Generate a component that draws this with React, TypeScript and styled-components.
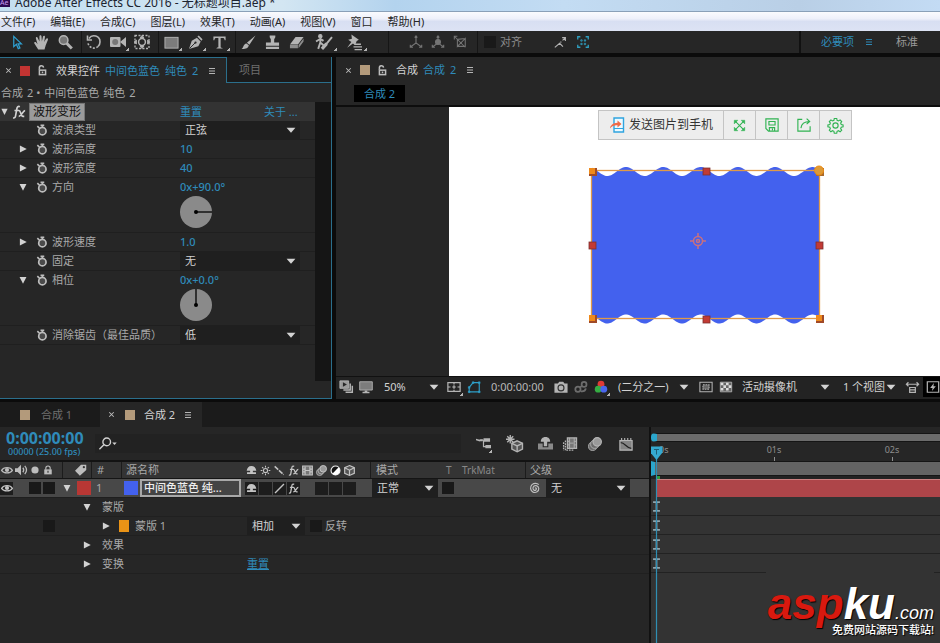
import React from "react";
import styled, { createGlobalStyle } from "styled-components";

const C = {
  panel: "#262626",
  dark: "#1b1b1b",
  line: "#0b0b0b",
  text: "#a9a9a9",
  bright: "#d2d2d2",
  dim: "#6f6f6f",
  blue: "#2f8bba",
  edge: "#2b6f8c",
};

const Global = createGlobalStyle`
  *, *::before, *::after { box-sizing: border-box; }
  body {
    margin: 0;
    background: ${C.line};
    color: ${C.text};
    font: 11px/16px "Noto Sans", "Noto Sans CJK SC", sans-serif;
    overflow: hidden;
  }
  button, select, input { font: inherit; color: inherit; margin: 0; padding: 0; border: 0; background: none; }
  button { white-space: nowrap; }
  a { color: inherit; }
`;

/* ---------- icons ---------- */

const Svg = styled.svg<{ $size: number }>`
  display: block;
  flex: none;
  width: ${(p) => p.$size}px;
  height: ${(p) => p.$size}px;
  overflow: visible;
`;

const icons: Record<string, React.ReactNode> = {
  arrow: <path d="M4 1.500v11l2.800-2.500 2 4.500 1.800-.8-2-4.300h3.600z" fill="none" stroke="#2f9fd0" strokeWidth="1.300" />,
  hand: <path fill="currentColor" d="M4.500 15.500L.4 9c-.8-1.300.9-2.200 1.700-1.200L3.800 9.800 2 3.600c-.3-1.500 1.600-1.900 2-.5L5.800 7V1.500c0-1.600 2.100-1.600 2.200 0l.4 5.300 1.200-5.100c.4-1.500 2.400-1.100 2.100.5l-.8 5.300 2-3.400c.9-1.300 2.500-.4 1.900 1.100L12.500 11l-1.300 4.500z" />,
  zoom: <g><circle cx="6" cy="5.500" r="4.600" fill="#777" stroke="currentColor" strokeWidth="1.600" /><path d="M9.200 8.800l5.500 5.600" stroke="currentColor" strokeWidth="3.200" /></g>,
  rotate: <g fill="none" stroke="currentColor" strokeWidth="1.600"><path d="M3 4.500A6 6 0 0 1 14 8 6 6 0 0 1 12 12.500" /><path d="M12 12.500A6 6 0 0 1 2 9" strokeDasharray="2 1.500" /><path d="M1.500 1.500v4.500H6" /></g>,
  camera: <g fill="currentColor"><rect x="0" y="3" width="10.500" height="10" rx="1" /><path d="M10 8l6-5v10z" /><circle cx="5.200" cy="8" r="3" fill="#777" /></g>,
  panbehind: <g fill="none" stroke="currentColor"><rect x="1" y="1.500" width="14" height="13" strokeDasharray="2 1.500" strokeWidth="1.300" /><circle cx="8" cy="8" r="3.400" strokeWidth="1.500" /><path fill="currentColor" d="M0 8l2.500-2v4zM16 8l-2.500-2v4zM8 1.500l2 2.500H6zM8 14.500L6 12h4z" strokeWidth=".8" /></g>,
  rect: <rect x="1" y="2.500" width="14" height="11.500" fill="#7c7c7c" stroke="currentColor" />,
  pen: <g><path fill="currentColor" d="M1 15L4 6l5.500-3 4 4L11 12z" /><path fill="currentColor" d="M10 1.500l1.500-1 4 4-1.200 1.700z" /><path d="M1.500 14.500L7.500 8.500" stroke="#262626" /><circle cx="8" cy="8" r="1.200" fill="#262626" /></g>,
  type: <path fill="currentColor" d="M1.500 1.500h13V5.500h-1c-.2-1.500-.8-2.200-2.300-2.200H9.200V12.500c0 1 .5 1.200 2 1.300v.7H4.800v-.7c1.500-.1 2-.3 2-1.300V3.300H4.800c-1.500 0-2.100.7-2.300 2.200h-1z" />,
  brush: <path fill="currentColor" d="M15.500.5L9 10.300 6.300 8.300zM5.800 9l2.500 2C7.800 14.500 4.500 15.200.5 15 3 13.500 2.300 9.500 5.800 9z" />,
  stamp: <path fill="currentColor" d="M5 .5h6v2L9.800 4.500v3.500H15v3.500H1V8h5.200V4.500L5 2.500zM1 12.500h14V15H1z" />,
  eraser: <g><path fill="currentColor" d="M7 2h8.500l-6 8H1z" /><path fill="#8c8c8c" d="M1 10.700h8.500V14H1zM10.200 10.700L15.500 3.600V7l-5.300 7z" /></g>,
  roto: <g fill="none" stroke="currentColor"><circle cx="5" cy="2" r="1.600" fill="currentColor" /><path d="M5 4v4l3 2.500M5 8l-2 6M1 7l4-2.500 3 2" strokeWidth="1.800" /><path d="M16 3L10.500 9.500" strokeWidth="1.800" /><path d="M11 9l-4.500 5" strokeWidth="3" /></g>,
  pin: <g fill="currentColor"><path d="M6 .5l7 5-2 1-1.500 4-2-1.500-5.500 4 4-5.500L3 5.500l3.500-1z" /><path d="M9 9h6v1.300H9zM8 11.500h8v1.300H8zM9 14h7v1.300H9z" /></g>,
  axis: <g fill="none" stroke="currentColor" strokeWidth="1.300"><path d="M8 1v8L2 13.500M8 9l6 4.500M6.500 3L8 1l1.500 2M1.500 11v3h3M14.500 11v3h-3" /></g>,
  axisball: <g fill="none" stroke="currentColor" strokeWidth="1.300"><path d="M8 1v8L2 13.500M8 9l6 4.500M6.500 3L8 1l1.500 2M1.500 11v3h3M14.500 11v3h-3" /><circle cx="8" cy="8" r="2.800" fill="currentColor" /></g>,
  axisbox: <g fill="none" stroke="currentColor" strokeWidth="1.200"><path d="M2 2l12 12M1.500 5V1.500H5M5 5v8l9-9v10M5 5l9-1M5 13h9" /></g>,
  snap: <g fill="none" stroke="currentColor" strokeWidth="1.400"><path d="M1 14l6-5 4 4M8 8l1-1M10.500 5.500l3-3M10 2h4v4" /></g>,
  snapbox: <g fill="none" stroke="#2f9fc0" strokeWidth="1.500"><path d="M2 5V2h3M11 2h3v3M14 11v3h-3M5 14H2v-3" /><path d="M5.500 5.500h1.500v1.500H5.500zM9.500 5.500h1.500v1.500H9.500zM5.500 9.500h1.500v1.500H5.500zM9.500 9.500h1.500v1.500H9.500z" strokeWidth="1" /></g>,
  menu: <path d="M2 3h12M2 8h12M2 13h12" stroke="currentColor" strokeWidth="1.900" />,
  close: <path d="M4 4l8 8M12 4l-8 8" stroke="currentColor" strokeWidth="1.800" />,
  unlock: <g fill="none" stroke="currentColor" strokeWidth="2.200"><path d="M3.500 7V4.500a3 3 0 0 1 6-.8" /><rect x="3.500" y="7.500" width="9" height="6.500" /><path d="M8 9.500v2.500" /></g>,
  lock: <g><path d="M4.500 7.500V5a3.500 3.500 0 0 1 7 0v2.500" fill="none" stroke="currentColor" strokeWidth="1.800" /><path fill="currentColor" d="M2 7h12v8H2z" /><path d="M8 9v3.500" stroke="#333" strokeWidth="1.800" /></g>,
  stopwatch: <g fill="none" stroke="currentColor"><circle cx="8.500" cy="9.500" r="4.900" strokeWidth="2.300" fill="#4a4a4a" /><path d="M8.500 4.500V2M6 1.700h5M1.800 2.800l3.200 3.200" strokeWidth="2.200" /></g>,
  right: <path d="M3 2.500l11 5.500-11 5.500z" fill="currentColor" />,
  down: <path d="M2.500 3h11L8 14z" fill="currentColor" />,
  caret: <path d="M1 4.500h14L8 12.500z" fill="currentColor" />,
  fx: (
    <g fill="none" stroke="currentColor" strokeWidth="1.900">
      <path d="M9 2c-2-1-3.100.2-3.400 2L4 12.800c-.3 1.600-1.200 2.200-2.700 1.700M2.800 6.300h5.400M8 6.500c2.200 0 2 6.500 4.500 6.500h1.500M15 6.500c-2.700 0-4 6.500-7.300 6.500" />
    </g>
  ),
  pages: <g><path d="M1 1h10v8.500H1z" fill="#9a9a9a" stroke="currentColor" /><path d="M12.800 4v7.300H5M15.200 6.500V14H7.500" fill="none" stroke="currentColor" strokeWidth="1.700" /><path d="M4.500 2.600v5.200l4.500-2.600z" fill="#262626" /></g>,
  monitor: <g><path d="M.8 2h14.400v9.500H.8z" fill="#7c7c7c" stroke="currentColor" /><path d="M6.500 12h3v1.500h2.500V15H4v-1.500h2.500z" fill="currentColor" /></g>,
  guides: <g fill="none" stroke="currentColor" strokeWidth="1.400"><path d="M1 3h14v10H1zM8 3v2M8 11v2M1 8h3M12 8h3M6 8h4M8 6v4" /></g>,
  maskshape: <g fill="none" stroke="#2f9fc8" strokeWidth="1.300"><path d="M2.500 13.500v-5L7 3h7v10.500z" /><path fill="#2f9fc8" d="M1.500 12.500h2v2h-2zM13 12.500h2v2h-2zM13 2h2v2h-2zM6 2h2v2H6zM1.500 7.500h2v2h-2z" strokeWidth=".5" /></g>,
  photo: <g><path fill="currentColor" d="M.5 4h4L6 2h4.500L12 4h3.500v10.500H.5z" /><circle cx="8" cy="9" r="3.400" fill="none" stroke="#333" strokeWidth="1.300" /></g>,
  chain: <g fill="none" stroke="#6d6d6d" strokeWidth="2"><circle cx="4.500" cy="10.500" r="3" /><circle cx="11.500" cy="5" r="2.800" /><path d="M6.500 8.500l3-2M8 13c4 .5 5-1 5.500-3.500" /></g>,
  rgb: <g><circle cx="8" cy="4.800" r="3.900" fill="#e03a35" /><circle cx="4.800" cy="10.500" r="3.900" fill="#35ad43" /><circle cx="11.200" cy="10.500" r="3.900" fill="#4a66ee" /></g>,
  region: <g fill="none" stroke="currentColor" strokeWidth="1.200"><path d="M1 2.500h14v11H1z" /><path fill="#666" d="M4.500 5.500h7v5h-7z" strokeDasharray="2 1" /></g>,
  checker: <g><path fill="#666" stroke="currentColor" d="M1.500 2.500h13v11h-13z" /><path fill="#dcdcdc" d="M2 3h3v3H2zM8 3h3v3H8zM5 6h3v3H5zM11 6h3v3h-3zM2 9h3v3H2zM8 9h3v3H8z" /></g>,
  pixel: <g fill="none" stroke="currentColor" strokeWidth="1.500"><path d="M0 4h16M3 1.500L.5 4 3 6.500M13 1.500L15.500 4 13 6.500M4.500 8h7v6h-7zM4.500 11h7" /></g>,
  fast: <g><path fill="none" stroke="currentColor" strokeWidth="1.400" d="M1.500 2h13v12h-13z" /><path d="M9 3.500L4.800 9h2.700L6.800 12.500 11.200 7H8.500z" fill="currentColor" /></g>,
  search: <g fill="none" stroke="currentColor" strokeWidth="1.700"><circle cx="9.500" cy="6" r="4.700" /><path d="M6 9.500L.5 15" /></g>,
  flow: <g fill="currentColor"><path d="M0 3l4 1v-.5h3v2H4v.3L0 4.500zM8 2.500h7v3.500H8zM10 9.500h6v3.500h-6z" /><path d="M6 4.500h2M8 4.500v6.800h3" fill="none" stroke="currentColor" strokeWidth="1.300" /></g>,
  draft3d: <g fill="none" stroke="currentColor" strokeWidth="1.300"><path d="M4 0v8M0 4h8M1.200 1.200l5.600 5.600M6.800 1.200L1.200 6.800" /><path fill="#555" d="M10.500 5.500l5 2.300v5.500l-5 2.500-5-2.500V7.800z" /><path d="M5.500 7.800l5 2.500 5-2.500M10.500 10.300v5.500" /></g>,
  shy: <g fill="currentColor"><path d="M0 8h5v4h6V8h5v6.500H0z" fill="#8a8a8a" /><path d="M8 1c3.500 0 5 2.300 5 5H9.800v5H6.200V6H3c0-2.700 1.500-5 5-5z" /></g>,
  shysmall: <g fill="currentColor"><path d="M8 1.500c4.500 0 6.500 3 7 7H10v2h4.500V13h-13v-2.500H6v-2H1c.5-4 2.500-7 7-7z" /></g>,
  frames: <g><path d="M5 1h10.500v12H5z" fill="#777" stroke="currentColor" strokeWidth="1.400" /><path d="M7.500 1v12M12.800 1v12M5 5h2.500M5 9h2.500M12.800 5h2.700M12.800 9h2.700M8 7h4" stroke="currentColor" /><path d="M2.800 4v11h9M.7 6v9.500" fill="none" stroke="currentColor" strokeWidth="1.500" strokeDasharray="2 1" /></g>,
  blur: <g stroke="currentColor" fill="#6b6b6b"><circle cx="5.300" cy="10.700" r="4.700" /><circle cx="7.700" cy="8.300" r="4.700" /><circle cx="10.500" cy="5.500" r="4.800" fill="#9a9a9a" strokeWidth="1.400" /></g>,
  graph: <g><path fill="#858585" stroke="currentColor" strokeWidth="1.300" d="M1 4h14v11H1zM3 1v3M6.500 1v3M10 1v3M13.500 1v3" /><path d="M2 6.500c5 0 6 6 12 6.500" fill="none" stroke="#222" strokeWidth="1.400" /></g>,
  eye: <g><path d="M.8 8.500C3.500 3.500 12.500 3.500 15.200 8.500 12.500 13 3.500 13 .8 8.500z" fill="none" stroke="currentColor" strokeWidth="1.600" /><circle cx="8" cy="8" r="2.800" fill="currentColor" /></g>,
  speaker: <g><path fill="currentColor" d="M0 5.500h3.500L8 1v14L3.500 10.500H0z" /><path d="M10.500 5c1.500 2 1.500 4 0 6M13 2.500c3 3.500 3 7.500 0 11" fill="none" stroke="currentColor" strokeWidth="1.700" /></g>,
  dot: <circle cx="8" cy="8" r="4.800" fill="currentColor" />,
  tag: <g><path fill="currentColor" d="M8 1h7v7L6.500 15.500 0 9z" /><circle cx="11.800" cy="4.300" r="1.500" fill="#333" /></g>,
  sun: <g fill="none" stroke="currentColor" strokeWidth="1.500"><circle cx="8" cy="8" r="3" /><path d="M8 1v2.500M8 12.500V15M1 8h2.500M12.500 8H15M3 3l2 2M11 11l2 2M13 3l-2 2M5 11l-2 2" /></g>,
  slashback: <path d="M1 2l13 12" stroke="currentColor" strokeWidth="2.200" strokeDasharray="7 1.500" />,
  slash: <path d="M1.500 14.500L14.500 1.500" stroke="currentColor" strokeWidth="2" />,
  film: <g fill="none" stroke="currentColor" strokeWidth="1.700"><path fill="#777" d="M1 1.500h14v13H1z" /><path d="M4.500 2v12M11.500 2v12M1.500 6h3M1.500 10h3M11.500 6h3M11.500 10h3M4.500 8h7" /></g>,
  half: <g><circle cx="8" cy="8" r="6.500" fill="#111" stroke="#eee" strokeWidth="1.700" /><path d="M12.600 3.400A6.500 6.500 0 0 1 3.400 12.600z" fill="#fff" /></g>,
  cube: <g fill="none" stroke="currentColor" strokeWidth="1.700"><path fill="#555" d="M8 .8l7 3.200v8L8 15.200 1 12V4z" /><path d="M1 4l7 3.500L15 4M8 7.500V15" /></g>,
  whip: <path d="M8 8.500c1-1.500 2.800.3 1.500 1.800C7.500 12.500 4.500 10 5.500 7c1.500-3.500 6.800-2.500 7.500 1.500.5 4-4 6.500-7.500 5C1.500 11.500 1 6.500 4 3.500 7 1 11 1.500 13 3.500" fill="none" stroke="currentColor" strokeWidth="1.600" />,
  phone: <g><path d="M5 1h9.500v14H5z" fill="#eefaff" stroke="#2fa4df" strokeWidth="1.400" /><path d="M5 11.500h9.500" stroke="#2fa4df" /><path d="M8.500 3.500L12.500 7 8.500 10.500V8.300C5.500 8 3 9 1 11.500 1.300 8.500 4 6 8.500 5.800z" fill="#f26a46" /></g>,
  expand: <g stroke="#30b352" strokeWidth="1.300" fill="#30b352"><path d="M3 3l10 10M13 3L3 13" /><path d="M1.500 1.500H6L1.500 6zM14.500 1.500V6L10 1.500zM1.500 14.500V10L6 14.500zM14.500 14.500H10L14.500 10z" strokeWidth=".5" /></g>,
  save: <g stroke="#30b352" strokeWidth="1.300" fill="none"><path d="M1 1h14v14H4l-3-3zM4.500 4h7v4h-7zM5 15v-4h6v4M8.500 12v2" /></g>,
  share: <g stroke="#30b352" strokeWidth="1.300" fill="none"><path d="M6 1.500H1v13.500h14V9.500M4.500 11.500C5 7 8.500 4 14.500 4M11 .8L14.500 4 11 7" /></g>,
  gear: <g stroke="#30b352" strokeWidth="1.200" fill="none"><circle cx="8" cy="8" r="2.800" /><path d="M6.700.5h2.600l.4 2 1.500.6L12.900 2l1.700 1.800-1.100 1.700.6 1.400 2 .4v2.100l-2 .4-.6 1.500 1.100 1.700-1.700 1.700-1.700-1.100-1.500.6-.4 2H6.700l-.4-2-1.500-.6-1.700 1.100-1.700-1.700 1.100-1.700-.6-1.500-2-.4V7.300l2-.4.6-1.400L1.400 3.800 3.100 2l1.700 1.100 1.500-.6z" /></g>,
  ibeam: <path d="M3 1.500h10M3 14.500h10M8 1.500v13" stroke="#8ea5ae" strokeWidth="2.600" />,
};

const Icon = ({ name, size = 14 }: { name: string; size?: number }) => (
  <Svg viewBox="0 0 16 16" $size={size} aria-hidden="true">{icons[name]}</Svg>
);

/* ---------- shared controls ---------- */

const IconButton = styled.button<{ $w?: number; $dim?: boolean; $corner?: boolean; $black?: boolean }>`
  display: grid;
  place-items: center;
  flex: none;
  width: ${(p) => p.$w ?? 20}px;
  height: 20px;
  color: ${(p) => (p.$dim ? "#747474" : "#b4b4b4")};
  background: ${(p) => (p.$black ? "#000" : "none")};
  position: relative;
  &::after {
    content: "";
    display: ${(p) => (p.$corner ? "block" : "none")};
    position: absolute;
    right: 1px;
    bottom: 1px;
    width: 3px;
    height: 3px;
    background: linear-gradient(135deg, transparent 40%, #b4b4b4 40%);
  }
`;

const TextButton = styled.button<{ $tone?: string }>`
  color: ${(p) => p.$tone ?? C.blue};
`;

const SelectBox = styled.span<{ $w: number; $fill?: string }>`
  display: inline-grid;
  align-items: center;
  flex: none;
  width: ${(p) => p.$w}px;
  height: 18px;
  padding-right: 4px;
  background: ${(p) => p.$fill ?? "#1f1f1f"};
  color: ${C.bright};
  select {
    grid-area: 1 / 1;
    width: 100%;
    height: 18px;
    padding-left: 5px;
    appearance: none;
    outline: 0;
  }
  svg { grid-area: 1 / 1; justify-self: end; pointer-events: none; }
`;

const Select = ({ label, value, w, fill }: { label: string; value: string; w: number; fill?: string }) => (
  <SelectBox $w={w} $fill={fill}>
    <select aria-label={label} defaultValue={value}><option>{value}</option></select>
    <Icon name="caret" size={10} />
  </SelectBox>
);

const Tick = styled.input.attrs({ type: "checkbox" })`
  appearance: none;
  flex: none;
  width: 12px;
  height: 12px;
  background: #191919;
`;

const Swatch = styled.span<{ $c: string; $w?: number; $h?: number }>`
  flex: none;
  width: ${(p) => p.$w ?? 10}px;
  height: ${(p) => p.$h ?? 10}px;
  background: ${(p) => p.$c};
`;

/* ---------- window chrome ---------- */

const Page = styled.div`
  display: flex;
  flex-direction: column;
  min-height: 100vh;
`;

const TitleBar = styled.header`
  display: flex;
  align-items: flex-end;
  gap: 5px;
  height: 11px;
  overflow: hidden;
  color: #1c2430;
  font-size: 12px;
  line-height: 17px;
  white-space: nowrap;
  background: linear-gradient(90deg, #c3dff0 0, #d3e6f2 30%, #b3d3ee 42%, #c3dcf3 60%, #b9cfe6 85%, #c3dbf4 100%);
`;

const AppBadge = styled.span`
  align-self: flex-start;
  width: 10px;
  height: 7px;
  overflow: hidden;
  background: #2b0a52;
  color: #c79bf0;
  font-size: 7px;
  line-height: 6px;
`;

const MenuBar = styled.nav`
  display: flex;
  gap: 15px;
  height: 20px;
  padding-left: 1px;
  border-top: 1px solid #8aa0b8;
  background: linear-gradient(#fafbfe 0, #eef0fa 35%, #d8dff2 50%, #dde3f4 100%);
  color: #262626;
  line-height: 18px;
  button { font-size: 11px; }
`;

const ToolBar = styled.div`
  display: flex;
  align-items: center;
  height: 22px;
  padding-left: 5px;
  background: ${C.panel};
`;

const ToolGroup = styled.div<{ $pad?: number }>`
  display: flex;
  align-items: center;
  padding-right: ${(p) => p.$pad ?? 4}px;
`;

const Rule = styled.span`
  flex: none;
  width: 1px;
  height: 22px;
  background: #161616;
`;

const SnapLabel = styled.label`
  display: flex;
  align-items: center;
  gap: 4px;
  padding: 0 26px 0 6px;
  color: #8b8b8b;
`;

const Workspaces = styled.div`
  display: flex;
  align-items: center;
  gap: 11px;
  width: 141px;
  height: 22px;
  margin-left: auto;
  padding-left: 20px;
  border-left: 2px solid #111;
`;

/* ---------- panels ---------- */

const Upper = styled.div`
  display: grid;
  grid-template-columns: 332px minmax(0, 1fr);
  gap: 4px;
  height: 342px;
  margin-top: 4px;
`;

const EffectPanel = styled.section`
  display: flex;
  flex-direction: column;
  min-width: 0;
  background: ${C.panel};
  border-right: 1px solid ${C.edge};
  border-bottom: 1px solid ${C.edge};
`;

const TabStrip = styled.div`
  display: flex;
  height: 26px;
`;

const ActiveTab = styled.div`
  display: flex;
  align-items: center;
  gap: 7px;
  width: 227px;
  padding-left: 4px;
  border-top: 1px solid ${C.edge};
  border-right: 1px solid ${C.edge};
  color: ${C.bright};
  white-space: nowrap;
`;

const TabTitle = styled.span`
  display: flex;
  gap: 5px;
  padding: 0 3px 0 1px;
`;

const IdleTab = styled.button`
  flex: 1;
  padding-left: 12px;
  background: ${C.dark};
  border-bottom: 1px solid ${C.edge};
  color: ${C.dim};
  text-align: left;
`;

const Blue = styled.span`
  color: ${C.blue};
`;

const Glyph = styled.span<{ $c?: string }>`
  display: flex;
  flex: none;
  color: ${(p) => p.$c ?? "#bdbdbd"};
`;

const SourceLine = styled.div`
  display: flex;
  gap: 4px;
  height: 19px;
  padding-left: 1px;
  line-height: 20px;
`;

const EffectBody = styled.div`
  display: grid;
  grid-template-columns: minmax(0, 1fr) 16px;
  height: 279px;
`;

const ScrollTrack = styled.div`
  background: #151515;
`;

const EffectHead = styled.div`
  display: grid;
  grid-template-columns: 29px 151px 84px 1fr;
  align-items: center;
  height: 19px;
  background: #333;
  button { justify-self: start; }
`;

const HeadIcons = styled.span`
  display: flex;
  align-items: center;
  gap: 3px;
  color: ${C.bright};
`;

const EffectName = styled.span`
  justify-self: start;
  height: 18px;
  padding: 0 3px;
  background: #9b9b9b;
  border: 1px solid #777;
  color: #111;
  font-size: 12px;
  line-height: 16px;
`;

const PropRow = styled.div<{ $tall?: boolean }>`
  display: grid;
  grid-template-columns: 18px 18px 16px 128px 120px;
  grid-template-rows: 18px;
  align-items: center;
  height: ${(p) => (p.$tall ? 55 : 19)}px;
  border-bottom: 1px solid #1f1f1f;
`;

const PropName = styled.span`
  white-space: nowrap;
`;

const PropValue = styled.div`
  align-self: start;
`;

const Num = styled.button`
  display: block;
  height: 18px;
  color: ${C.blue};
  line-height: 18px;
  font-weight: 500;
`;

const Dial = ({ angle }: { angle: number }) => (
  <Svg viewBox="0 0 32 32" $size={32} role="img" aria-label={`${angle}°`}>
    <circle cx="16" cy="16" r="16" fill="#8a8a8a" />
    <g transform={`rotate(${angle} 16 16)`}>
      <circle cx="16" cy="16" r="2" />
      <path d="M16 16V0" stroke="#000" strokeWidth="1.300" />
    </g>
  </Svg>
);

type Prop = { name: string; twirl?: "right" | "down"; num?: string; pick?: string; angle?: number };

const props: Prop[] = [
  { name: "波浪类型", pick: "正弦" },
  { name: "波形高度", twirl: "right", num: "10" },
  { name: "波形宽度", twirl: "right", num: "40" },
  { name: "方向", twirl: "down", num: "0x+90.0°", angle: 90 },
  { name: "波形速度", twirl: "right", num: "1.0" },
  { name: "固定", pick: "无" },
  { name: "相位", twirl: "down", num: "0x+0.0°", angle: 0 },
  { name: "消除锯齿（最佳品质）", pick: "低" },
];

const Effects = () => (
  <EffectPanel>
    <TabStrip>
      <ActiveTab>
        <Glyph><Icon name="close" size={9} /></Glyph>
        <Swatch $c="#c23432" />
        <Glyph><Icon name="unlock" size={11} /></Glyph>
        <TabTitle><span>效果控件</span><Blue>中间色蓝色</Blue><Blue>纯色</Blue><Blue>2</Blue></TabTitle>
        <Glyph><Icon name="menu" size={8} /></Glyph>
      </ActiveTab>
      <IdleTab>项目</IdleTab>
    </TabStrip>
    <SourceLine><span>合成</span><span>2 •</span><span>中间色蓝色</span><span>纯色</span><span>2</span></SourceLine>
    <EffectBody>
      <div>
        <EffectHead>
          <HeadIcons><Icon name="down" size={9} /><Icon name="fx" size={14} /></HeadIcons>
          <EffectName>波形变形</EffectName>
          <TextButton>重置</TextButton>
          <TextButton>关于 ...</TextButton>
        </EffectHead>
        {props.map((p) => (
          <PropRow key={p.name} $tall={p.angle !== undefined}>
            <span />
            <Glyph $c={C.bright}>{p.twirl && <Icon name={p.twirl} size={10} />}</Glyph>
            <Glyph><Icon name="stopwatch" size={12} /></Glyph>
            <PropName>{p.name}</PropName>
            <PropValue>
              {p.pick && <Select label={p.name} value={p.pick} w={120} />}
              {p.num && <Num>{p.num}</Num>}
              {p.angle !== undefined && <Dial angle={p.angle} />}
            </PropValue>
          </PropRow>
        ))}
      </div>
      <ScrollTrack />
    </EffectBody>
  </EffectPanel>
);

/* ---------- composition viewer ---------- */

const Viewer = styled.section`
  display: flex;
  flex-direction: column;
  min-width: 0;
  background: ${C.panel};
`;

const ViewerTab = styled.div`
  display: flex;
  align-items: center;
  gap: 7px;
  height: 26px;
  padding-left: 8px;
  color: ${C.bright};
`;

const Crumbs = styled.div`
  height: 24px;
  padding: 2px 0 0 18px;
  border-bottom: 2px solid #0d0d0d;
  button { width: 51px; height: 17px; background: #000; color: ${C.blue}; line-height: 17px; }
`;

const Stage = styled.div`
  display: grid;
  grid-template-columns: 113px minmax(0, 1fr);
  flex: 1;
`;

const Canvas = styled.div`
  grid-column: 2;
  position: relative;
  background: #fff;
`;

const Layer = styled.svg`
  position: absolute;
  left: 136px;
  top: 53px;
  width: 242px;
  height: 170px;
`;

const SharePopup = styled.div`
  position: absolute;
  left: 149px;
  top: 3px;
  display: flex;
  height: 30px;
  border: 1px solid #c4c4c4;
  background: #ededed;
  button { display: flex; align-items: center; justify-content: center; width: 32px; border-left: 1px solid #c4c4c4; }
  button:first-child { width: 124px; gap: 4px; border-left: 0; color: #333; font-size: 12px; }
`;

const wave = () => {
  const top: string[] = [];
  const bottom: string[] = [];
  for (let x = 7; x <= 234; x += 1) {
    const dy = 4.5 * Math.cos((2 * Math.PI * (x - 41)) / 37.3);
    top.push(`${x} ${(11.5 - dy).toFixed(2)}`);
    bottom.unshift(`${x} ${(159 - dy).toFixed(2)}`);
  }
  return `M${top.join("L")}L${bottom.join("L")}Z`;
};

const corners = [[8, 12], [8, 159], [235, 159]];
const mids = [[122, 12], [8, 86], [235, 86], [122, 160]];

const LayerArt = () => (
  <Layer viewBox="0 0 242 170" role="img" aria-label="中间色蓝色 纯色 2">
    <path d={wave()} fill="#4361ee" />
    <rect x="6.500" y="10.500" width="228" height="148" fill="none" stroke="#e09a48" strokeWidth="1.300" />
    {mids.map(([x, y]) => <rect key={`${x}-${y}`} x={x - 4} y={y - 4} width="7" height="7" fill="#c23a34" stroke="#7c3030" strokeWidth=".8" />)}
    {corners.map(([x, y]) => (
      <g key={`${x}-${y}`}>
        <rect x={x - 4} y={y - 4} width="8" height="8" fill="#a04a28" />
        <rect x={x - 4} y={y - 4} width="6" height="6" fill="#ee8a1c" />
      </g>
    ))}
    <rect x="231" y="8" width="8" height="8" fill="#a96a2a" />
    <circle cx="234" cy="10.500" r="4.500" fill="#dc9a38" stroke="#f08c10" />
    <g fill="none" stroke="#c9707e" strokeWidth="1.500">
      <circle cx="113" cy="81" r="4.500" />
      <circle cx="113" cy="81" r="1.500" />
      <path d="M113 73v4M113 85v4M105 81h4M117 81h4" />
    </g>
  </Layer>
);

const ViewBar = styled.div`
  display: flex;
  align-items: center;
  height: 23px;
  padding-bottom: 2px;
  border-top: 1px solid #111;
  background: #232323;
`;

const ViewGroup = styled.div<{ $pad: number }>`
  display: flex;
  align-items: center;
  flex: none;
  padding-right: ${(p) => p.$pad}px;
`;

const Comp = () => (
  <Viewer>
    <ViewerTab>
      <Glyph><Icon name="close" size={9} /></Glyph>
      <Swatch $c="#b39a7b" />
      <Glyph><Icon name="unlock" size={11} /></Glyph>
      <TabTitle><span>合成</span><Blue>合成</Blue><Blue>2</Blue></TabTitle>
      <Glyph><Icon name="menu" size={8} /></Glyph>
    </ViewerTab>
    <Crumbs><button>合成 2</button></Crumbs>
    <Stage>
      <Canvas>
        <LayerArt />
        <SharePopup>
          <button><Icon name="phone" size={16} />发送图片到手机</button>
          <button aria-label="全屏"><Icon name="expand" size={13} /></button>
          <button aria-label="保存"><Icon name="save" size={14} /></button>
          <button aria-label="分享"><Icon name="share" size={14} /></button>
          <button aria-label="设置"><Icon name="gear" size={15} /></button>
        </SharePopup>
      </Canvas>
    </Stage>
    <ViewBar>
      <ViewGroup $pad={3}>
        <IconButton aria-label="预览"><Icon name="pages" /></IconButton>
        <IconButton aria-label="显示器"><Icon name="monitor" /></IconButton>
      </ViewGroup>
      <ViewGroup $pad={1}><Select label="缩放" value="50%" w={64} fill="#232323" /></ViewGroup>
      <ViewGroup $pad={7}>
        <IconButton aria-label="网格" $corner><Icon name="guides" /></IconButton>
        <IconButton aria-label="蒙版"><Icon name="maskshape" /></IconButton>
      </ViewGroup>
      <ViewGroup $pad={7}><TextButton $tone="#b8b8b8">0:00:00:00</TextButton></ViewGroup>
      <ViewGroup $pad={2}>
        <IconButton aria-label="快照"><Icon name="photo" /></IconButton>
        <IconButton aria-label="显示快照"><Icon name="chain" /></IconButton>
        <IconButton aria-label="通道" $corner><Icon name="rgb" /></IconButton>
      </ViewGroup>
      <ViewGroup $pad={3}><Select label="分辨率" value="(二分之一)" w={80} fill="#232323" /></ViewGroup>
      <ViewGroup $pad={1}>
        <IconButton aria-label="目标区域"><Icon name="region" /></IconButton>
        <IconButton aria-label="透明网格"><Icon name="checker" /></IconButton>
      </ViewGroup>
      <ViewGroup $pad={4}><Select label="摄像机" value="活动摄像机" w={97} fill="#232323" /></ViewGroup>
      <ViewGroup $pad={3}><Select label="视图" value="1 个视图" w={62} fill="#232323" /></ViewGroup>
      <IconButton aria-label="像素长宽比"><Icon name="pixel" size={13} /></IconButton>
      <IconButton aria-label="快速预览" $black><Icon name="fast" /></IconButton>
    </ViewBar>
  </Viewer>
);

/* ---------- timeline ---------- */

const Timeline = styled.section`
  display: flex;
  flex-direction: column;
  flex: 1;
  margin-top: 3px;
  background: ${C.panel};
`;

const TimeTabs = styled.div`
  display: flex;
  height: 25px;
  background: ${C.dark};
`;

const TimeTab = styled.div<{ $on?: boolean }>`
  display: flex;
  align-items: center;
  gap: ${(p) => (p.$on ? 9 : 11)}px;
  width: ${(p) => (p.$on ? 102 : 100)}px;
  padding-left: ${(p) => (p.$on ? 7 : 20)}px;
  background: ${(p) => (p.$on ? C.panel : C.dark)};
  color: ${(p) => (p.$on ? C.bright : C.dim)};
  white-space: nowrap;
`;

const TimeBody = styled.div`
  display: grid;
  grid-template-columns: 649px minmax(0, 1fr);
  flex: 1;
`;

const TimeTop = styled.div`
  display: flex;
  align-items: center;
  height: 35px;
  padding: 0 13px 0 6px;
  border-bottom: 2px solid #131313;
`;

const Clock = styled.div`
  width: 89px;
  color: ${C.blue};
  button { display: block; height: 17px; font-size: 16px; font-weight: 700; line-height: 16px; }
  span { display: block; padding-left: 2px; font-size: 9px; line-height: 12px; font-weight: 500; }
`;

const SearchBox = styled.label`
  display: flex;
  align-items: center;
  flex: 1;
  height: 19px;
  margin-right: 12px;
  padding-left: 4px;
  background: #222;
  color: ${C.bright};
  input { flex: 1; min-width: 0; outline: 0; }
`;

const TimeTools = styled.div`
  display: flex;
  align-items: center;
  gap: 5px;
`;

const columns = "62px 29px 30px 124px 125px 155px minmax(0, 1fr)";

const ColumnHead = styled.div`
  display: grid;
  grid-template-columns: ${columns};
  align-items: center;
  height: 17px;
  background: #343434;
  border-bottom: 1px solid #151515;
`;

const Cell = styled.div<{ $pad?: number; $gap?: number; $rule?: boolean }>`
  display: flex;
  align-items: center;
  gap: ${(p) => p.$gap ?? 0}px;
  height: 100%;
  padding-left: ${(p) => p.$pad ?? 0}px;
  border-left: ${(p) => (p.$rule ? "1px solid #1c1c1c" : "0")};
  white-space: nowrap;
`;

const Slot = styled.span<{ $fill?: boolean }>`
  display: grid;
  place-items: center;
  flex: none;
  width: 13px;
  height: 13px;
  margin-right: 1px;
  background: ${(p) => (p.$fill ? "#1d1d1d" : "none")};
  color: #c4c4c4;
`;

const Matte = styled.span`
  width: 16px;
  color: #888;
  font-size: 10px;
`;

const LayerRow = styled.div`
  display: grid;
  grid-template-columns: ${columns};
  align-items: center;
  height: 19px;
  background: #484848;
  border-bottom: 1px solid #1f1f1f;
`;

const LayerName = styled.span`
  flex: 1;
  height: 18px;
  margin-right: 4px;
  padding-left: 2px;
  border: 2px solid #a8a8a8;
  background: #444;
  color: #eee;
  font-weight: 500;
  line-height: 14px;
  overflow: hidden;
`;

const SubRow = styled.div`
  display: grid;
  grid-template-columns: 247px minmax(0, 1fr);
  align-items: center;
  height: 19px;
  border-bottom: 1px solid #202020;
`;

const Spacer = styled.span<{ $w: number }>`
  flex: none;
  width: ${(p) => p.$w}px;
`;

const Invert = styled.label`
  display: flex;
  align-items: center;
  gap: 3px;
  padding-left: 5px;
`;

const ResetLink = styled.a`
  color: ${C.blue};
`;

const Track = styled.div`
  position: relative;
  display: flex;
  flex-direction: column;
  border-left: 2px solid #111;
  background: #333;
  overflow: hidden;
`;

const WorkBar = styled.div`
  height: 9px;
  margin-top: 6px;
  border: solid #151515;
  border-width: 1px 0;
  border-left: 6px solid #2ba6cc;
  border-radius: 4px 0 0 4px;
  background: #6b6b6b;
`;

const RulerWrap = styled.div`
  background: ${C.panel};
`;

const Ruler = styled.div`
  display: flex;
  height: 19px;
`;

const Mark = styled.span`
  display: grid;
  justify-items: center;
  flex: none;
  width: 118px;
  color: #8e8e8e;
  font-size: 9px;
  line-height: 15px;
  &::after { content: ""; width: 1px; height: 4px; background: #8e8e8e; }
  &:first-child { width: 64px; padding-left: 8px; justify-items: start; }
  &:first-child::after { display: none; }
`;

const RangeBar = styled.div`
  height: 15px;
  border: solid #151515;
  border-width: 1px 0 1px 0;
  border-left: 4px solid #2ba6cc;
  background: #636363;
`;

const Cache = styled.div`
  height: 3px;
  background: linear-gradient(90deg, #222 5px, #2f9c3c 5px, #2f9c3c 9px, #222 9px);
`;

const Clip = styled.div`
  height: 18px;
  margin-left: 5px;
  border-top: 1px solid #c98080;
  background: #ae4549;
`;

const Lane = styled.div`
  display: flex;
  align-items: center;
  height: 19px;
  border-bottom: 1px solid #222;
`;

const Playhead = styled.svg`
  position: absolute;
  left: -1px;
  top: 19px;
  width: 13px;
  height: 197px;
`;

const Watermark = styled.aside`
  position: absolute;
  right: 6px;
  bottom: 0;
  width: 168px;
  height: 78px;
  padding-top: 14px;
  background: #333;
  color: #fff;
  text-align: right;
  white-space: nowrap;
  text-shadow: 1px 1px 1px #000;
`;

const Brand = styled.div`
  font: italic bold 44px/50px "Liberation Sans", Arial, sans-serif;
  height: 44px;
  b { color: #d8190f; }
  small { font-size: 18px; font-weight: 400; }
`;

const Tagline = styled.div`
  font-size: 11px;
  line-height: 14px;
  font-weight: 500;
`;

const switchIcons = ["shysmall", "sun", "slashback", "fx", "film", "blur", "half", "cube"];

const LayerList = () => (
  <div>
    <TimeTop>
      <Clock><button>0:00:00:00</button><span>00000 (25.00 fps)</span></Clock>
      <SearchBox><Icon name="search" size={13} /><Icon name="caret" size={5} /><input type="search" aria-label="搜索" /></SearchBox>
      <TimeTools>
        <IconButton aria-label="微型流程图" $corner><Icon name="flow" size={15} /></IconButton>
        <Spacer $w={1} />
        <IconButton aria-label="草图 3D"><Icon name="draft3d" size={17} /></IconButton>
        <Spacer $w={1} />
        <IconButton aria-label="隐藏层"><Icon name="shy" size={15} /></IconButton>
        <IconButton aria-label="帧混合"><Icon name="frames" size={14} /></IconButton>
        <IconButton aria-label="运动模糊"><Icon name="blur" size={14} /></IconButton>
        <Spacer $w={1} />
        <IconButton aria-label="图表编辑器"><Icon name="graph" size={14} /></IconButton>
      </TimeTools>
    </TimeTop>
    <ColumnHead>
      <Cell $pad={1} $gap={2}>{["eye", "speaker", "dot", "lock"].map((n) => <Glyph key={n}><Icon name={n} size={n === "lock" ? 10 : 12} /></Glyph>)}</Cell>
      <Cell $pad={12} $rule><Glyph><Icon name="tag" size={12} /></Glyph></Cell>
      <Cell $pad={5} $rule>#</Cell>
      <Cell $pad={4} $rule>源名称</Cell>
      <Cell>{switchIcons.map((n) => <Slot key={n}><Icon name={n} size={11} /></Slot>)}</Cell>
      <Cell $pad={5} $rule>模式<Spacer $w={48} /><Matte>T</Matte><Matte>TrkMat</Matte></Cell>
      <Cell $pad={4} $rule>父级</Cell>
    </ColumnHead>
    <LayerRow>
      <Cell><Slot $fill><Icon name="eye" size={12} /></Slot><Spacer $w={15} /><Tick aria-label="独奏" /><Spacer $w={2} /><Tick aria-label="锁定" /></Cell>
      <Cell $gap={5}><Glyph $c={C.bright}><Icon name="down" size={10} /></Glyph><Swatch $c="#b83734" $w={14} $h={14} /></Cell>
      <Cell $pad={5}>1</Cell>
      <Cell $pad={3} $gap={2}><Swatch $c="#4361ee" $w={14} $h={14} /><LayerName>中间色蓝色 纯...</LayerName></Cell>
      <Cell>
        <Slot $fill><Icon name="shysmall" size={11} /></Slot>
        <Slot $fill />
        <Slot $fill><Icon name="slash" size={11} /></Slot>
        <Slot $fill><Icon name="fx" size={11} /></Slot>
        <Slot />
        <Slot $fill /><Slot $fill /><Slot $fill />
      </Cell>
      <Cell $pad={2}><Select label="模式" value="正常" w={66} /><Spacer $w={4} /><Tick aria-label="保留透明度" /></Cell>
      <Cell $pad={4} $gap={5}><Glyph><Icon name="whip" size={12} /></Glyph><Select label="父级" value="无" w={84} /></Cell>
    </LayerRow>
    <SubRow><Cell $pad={82} $gap={10}><Glyph $c={C.bright}><Icon name="down" size={10} /></Glyph>蒙版</Cell></SubRow>
    <SubRow>
      <Cell $pad={43}>
        <Tick aria-label="锁定蒙版" /><Spacer $w={46} />
        <Glyph $c={C.bright}><Icon name="right" size={10} /></Glyph><Spacer $w={8} />
        <Swatch $c="#ea9316" $h={12} /><Spacer $w={6} />蒙版 1
      </Cell>
      <Cell><Select label="蒙版模式" value="相加" w={58} /><Invert><Tick />反转</Invert></Cell>
    </SubRow>
    <SubRow><Cell $pad={82} $gap={10}><Glyph $c={C.bright}><Icon name="right" size={10} /></Glyph>效果</Cell></SubRow>
    <SubRow>
      <Cell $pad={82} $gap={10}><Glyph $c={C.bright}><Icon name="right" size={10} /></Glyph>变换</Cell>
      <ResetLink href="#reset">重置</ResetLink>
    </SubRow>
  </div>
);

const TimeTrack = () => (
  <Track>
    <RulerWrap>
      <WorkBar />
      <Ruler>{["0s", "01s", "02s"].map((s) => <Mark key={s}>{s}</Mark>)}</Ruler>
      <RangeBar />
      <Cache />
    </RulerWrap>
    <Clip />
    {[1, 2, 3, 4].map((n) => <Lane key={n}><Icon name="ibeam" size={11} /></Lane>)}
    <Playhead viewBox="0 0 13 197" aria-hidden="true">
      <path d="M6.500 10v187" stroke="#2f8fb4" strokeWidth="1.200" />
      <path d="M.5.500h12v6l-6 7.500-6-7.500z" fill="#35a9d0" />
      <path d="M4 3.500h5M6.500 3.500v5" stroke="#1d5e78" />
    </Playhead>
    <Watermark>
      <Brand><b>asp</b>ku<small>.com</small></Brand>
      <Tagline>免费网站源码下载站!</Tagline>
    </Watermark>
  </Track>
);

const menus = ["文件(F)", "编辑(E)", "合成(C)", "图层(L)", "效果(T)", "动画(A)", "视图(V)", "窗口", "帮助(H)"];

export default function App() {
  return (
    <Page>
      <Global />
      <TitleBar><AppBadge>Ae</AppBadge><span>Adobe After Effects CC 2016 - 无标题项目.aep *</span></TitleBar>
      <MenuBar>{menus.map((m) => <button key={m}>{m}</button>)}</MenuBar>
      <ToolBar>
        <ToolGroup>{["arrow", "hand", "zoom"].map((n) => <IconButton key={n} aria-label={n} $w={24}><Icon name={n} size={15} /></IconButton>)}</ToolGroup>
        <Rule />
        <ToolGroup>{["rotate", "camera", "panbehind"].map((n) => <IconButton key={n} aria-label={n} $w={24} $corner={n === "camera"}><Icon name={n} size={16} /></IconButton>)}</ToolGroup>
        <Rule />
        <ToolGroup>{["rect", "pen", "type"].map((n) => <IconButton key={n} aria-label={n} $w={24} $corner><Icon name={n} size={15} /></IconButton>)}</ToolGroup>
        <Rule />
        <ToolGroup>
          {["brush", "stamp", "eraser"].map((n) => <IconButton key={n} aria-label={n} $w={24}><Icon name={n} size={15} /></IconButton>)}
          {["roto", "pin"].map((n) => <IconButton key={n} aria-label={n} $w={30} $corner><Icon name={n} size={17} /></IconButton>)}
        </ToolGroup>
        <Spacer $w={16} />
        <Rule />
        <Spacer $w={16} />
        <ToolGroup $pad={6}>{["axis", "axisball", "axisbox"].map((n) => <IconButton key={n} aria-label={n} $w={22} $dim><Icon name={n} size={14} /></IconButton>)}</ToolGroup>
        <Rule />
        <SnapLabel><Tick />对齐</SnapLabel>
        <IconButton aria-label="snap" $w={24}><Icon name="snap" size={13} /></IconButton>
        <IconButton aria-label="snapbox" $w={22}><Icon name="snapbox" size={14} /></IconButton>
        <Workspaces>
          <TextButton>必要项</TextButton>
          <Glyph $c={C.blue}><Icon name="menu" size={8} /></Glyph>
          <Spacer $w={1} />
          <TextButton $tone="#999">标准</TextButton>
        </Workspaces>
      </ToolBar>
      <Upper><Effects /><Comp /></Upper>
      <Timeline>
        <TimeTabs>
          <TimeTab><Swatch $c="#b39a7b" />合成 1</TimeTab>
          <TimeTab $on>
            <Glyph><Icon name="close" size={9} /></Glyph>
            <Swatch $c="#b39a7b" />合成 2
            <Glyph><Icon name="menu" size={8} /></Glyph>
          </TimeTab>
        </TimeTabs>
        <TimeBody><LayerList /><TimeTrack /></TimeBody>
      </Timeline>
    </Page>
  );
}
